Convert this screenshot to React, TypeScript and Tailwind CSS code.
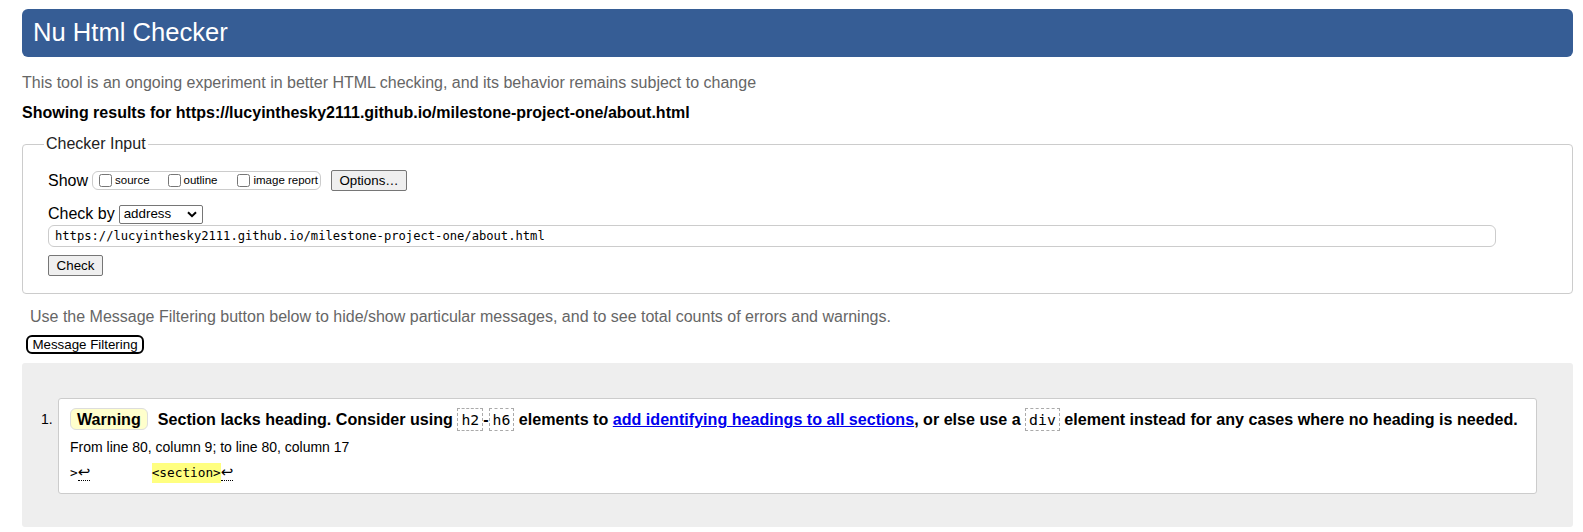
import React from 'react';

const url = 'https://lucyinthesky2111.github.io/milestone-project-one/about.html';

const Code = ({ children }: { children: React.ReactNode }) => (
  <code className="inline-block border border-dashed border-[#aaa] px-[3px] font-['DejaVu_Sans_Mono',monospace] text-[14.8px] font-normal leading-[21px] align-middle">
    {children}
  </code>
);

const Ret = () => (
  <abbr className="border-b border-dotted border-black font-['DejaVu_Sans',sans-serif] text-[15px] leading-[16px] no-underline" title="Line break">↩</abbr>
);

export default function App() {
  return (
    <div className="min-h-[532px] bg-white pl-[22px] pr-[10px] pt-[9px] font-['Liberation_Sans',Arial,sans-serif] text-black">
      {/* Header */}
      <h1 className="flex h-[48px] items-center rounded-[6px] bg-[#365d95] px-[11px] text-[25.6px] leading-none text-white">
        Nu Html Checker
      </h1>

      <p className="mt-[16px] text-[16px] leading-[20px] text-[#666]">
        This tool is an ongoing experiment in better HTML checking, and its behavior remains subject to change
      </p>
      <p className="mt-[10px] text-[16px] font-bold leading-[20px]">Showing results for {url}</p>

      {/* Checker input */}
      <fieldset className="mt-[11px] rounded-[4px] border border-[#ccc] pb-[16px] pl-[25px] pr-[76px]">
        <legend className="ml-[-4px] px-[2px] text-[16px] leading-[20px] text-[#222]">Checker Input</legend>

        <div className="mt-[15px] flex h-[23px] items-center">
          <span className="text-[16px] leading-[20px]">Show</span>
          <div className="ml-[4px] flex h-[19px] w-[229px] items-center rounded-[6px] border border-[#ccc] pl-[6px] text-[11.5px]">
            <label className="flex items-center">
              <input type="checkbox" className="m-0 h-[13px] w-[13px]" />
              <span className="ml-[3px]">source</span>
            </label>
            <label className="ml-[18px] flex items-center">
              <input type="checkbox" className="m-0 h-[13px] w-[13px]" />
              <span className="ml-[3px]">outline</span>
            </label>
            <label className="ml-[20px] flex items-center">
              <input type="checkbox" className="m-0 h-[13px] w-[13px]" />
              <span className="ml-[3px]">image report</span>
            </label>
          </div>
          <button className="ml-[10px] h-[21px] w-[76px] rounded-[2px] border border-[#767676] bg-[#efefef] text-[13.33px] leading-none">
            Options…
          </button>
        </div>

        <div className="mt-[12px] flex h-[20px] items-center">
          <span className="text-[16px] leading-[20px]">Check by</span>
          <div className="ml-[4px] flex h-[19px] w-[84px] items-center justify-between rounded-[2px] border border-[#767676] bg-white pl-[4px] pr-[5px] text-[13.33px]">
            <span>address</span>
            <svg width="10" height="7" viewBox="0 0 10 7">
              <path d="M1 1.2 L5 5.2 L9 1.2" fill="none" stroke="#000" strokeWidth="2" />
            </svg>
          </div>
        </div>

        <div className="mt-[1px] flex h-[22px] items-center rounded-[6px] border border-[#ccc] px-[6px] font-['DejaVu_Sans_Mono',monospace] text-[12.15px]">
          {url}
        </div>

        <button className="mt-[8px] h-[21px] w-[55px] rounded-[2px] border border-[#767676] bg-[#efefef] text-[13.33px] leading-none">
          Check
        </button>
      </fieldset>

      <p className="ml-[8px] mt-[13px] text-[16px] leading-[20px] text-[#666]">
        Use the Message Filtering button below to hide/show particular messages, and to see total counts of errors and warnings.
      </p>
      <button className="ml-[4px] mt-[8px] flex h-[19px] w-[118px] items-center justify-center rounded-[6px] border-2 border-black bg-white text-[13.33px] leading-none">
        Message Filtering
      </button>

      {/* Results */}
      <div className="mt-[9px] flex h-[164px] rounded-[3px] bg-[#eee] pb-[33px] pl-[19px] pr-[36px] pt-[35px]">
        <span className="w-[17px] shrink-0 pt-[13px] text-[14px] leading-[16px]">1.</span>
        <div className="flex-1 rounded-[3px] border border-[#ccc] bg-white pl-[11px] pt-[9px]">
          <p className="flex items-center text-[16.1px] font-bold leading-[22px] whitespace-pre">
            <span className="inline-block rounded-[6px] border border-[#ddd] bg-[#ffffcc] px-[6px] leading-[20px]">Warning</span>
            <span className="ml-[10px]">Section lacks heading. Consider using </span>
            <Code>h2</Code>
            <span>-</span>
            <Code>h6</Code>
            <span> elements to </span>
            <a href="#" className="text-[#0000ee] underline">add identifying headings to all sections</a>
            <span>, or else use a </span>
            <Code>div</Code>
            <span> element instead for any cases where no heading is needed.</span>
          </p>
          <p className="mt-[6px] text-[14px] leading-[20px]">From line 80, column 9; to line 80, column 17</p>
          <p className="mt-[6px] flex items-center font-['DejaVu_Sans_Mono',monospace] text-[12.75px] leading-[20px] whitespace-pre">
            <span>{'>'}</span>
            <Ret />
            <span>{'        '}</span>
            <span className="bg-[#ffff80]">{'<section>'}</span>
            <Ret />
          </p>
        </div>
      </div>
    </div>
  );
}
